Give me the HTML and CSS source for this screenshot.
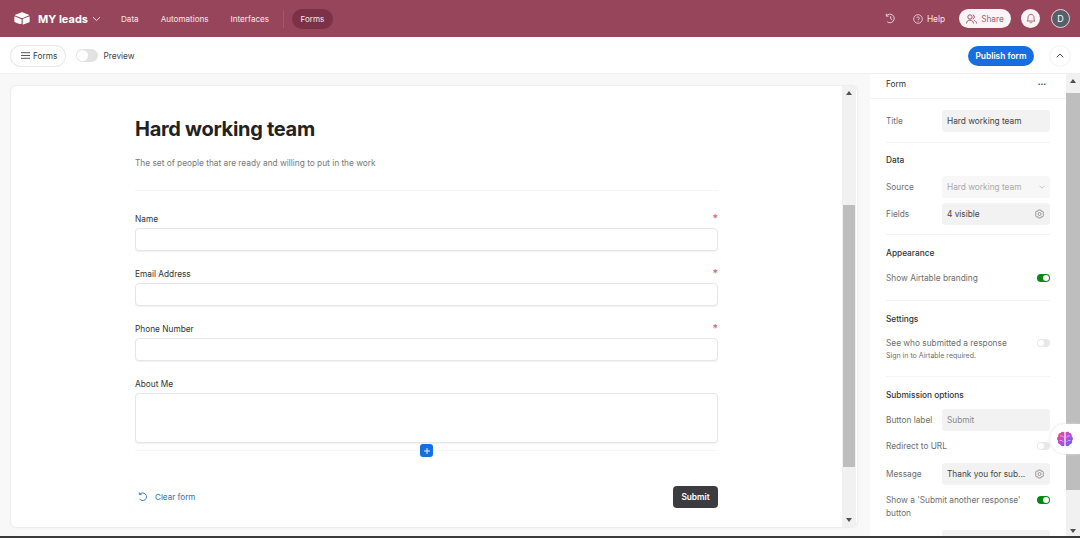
FILE: index.html
```html
<!DOCTYPE html>
<html lang="en">
<head>
  <meta charset="UTF-8">
  <meta name="viewport" content="width=device-width, initial-scale=1.0">
  <title>MY leads - Forms</title>
  <link rel="stylesheet" href="styles.css">
</head>
<body>
  <header class="topbar">
    <svg class="logo" width="16" height="13" viewBox="0 0 18 15">
      <path d="M8 .6 1.200 3.200c-.4.2-.4.700 0 .9L8 6.800c.7.300 1.400.300 2 0l6.800-2.700c.4-.2.4-.7 0-.9L10 .6C9.400.3 8.600.3 8 .6Z" fill="#fff"/>
      <path d="M9.800 8.300v5.700c0 .4.400.6.700.5l6.900-2.700c.3-.1.4-.3.400-.5V5.600c0-.4-.4-.6-.7-.5l-6.900 2.700c-.2.100-.4.300-.4.500Z" fill="#fff"/>
      <path d="M8.200 8.500 1 5.200c-.4-.2-.8.100-.8.500v5.200c0 .2.100.4.300.500l2.500 1.200c2 1 4 1.500 5.200 1.100.2-.1.300-.3.300-.5V9c0-.2-.1-.4-.3-.5Z" fill="#fff"/>
    </svg>
    <span class="base-name">MY leads</span>
    <svg class="chevron" width="9" height="6" viewBox="0 0 9 6"><path d="M1 1.200 4.500 4.600 8 1.200" fill="none" stroke="#f0dde2" stroke-width="1"/></svg>
    <nav class="nav">
      <a class="nav-link">Data</a>
      <a class="nav-link">Automations</a>
      <a class="nav-link">Interfaces</a>
      <span class="nav-sep"></span>
      <a class="nav-link nav-active">Forms</a>
    </nav>
    <div class="top-actions">
      <svg class="history" width="11" height="11" viewBox="0 0 11 11"><path d="M1.500 2.800A4.300 4.300 0 1 1 2.200 8.800M1.300.8v2.300h2.300M5.700 3.200v2.500l1.500 1" fill="none" stroke="#f3dfe4" stroke-width=".9"/></svg>
      <div class="help">
        <svg width="10" height="10" viewBox="0 0 10 10"><circle cx="5" cy="5" r="4.300" fill="none" stroke="#f3dfe4" stroke-width=".8"/><path d="M3.700 3.900A1.300 1.300 0 1 1 5 5.500v.7M5 7.200v.6" fill="none" stroke="#f3dfe4" stroke-width=".8"/></svg>
        <span>Help</span>
      </div>
      <button class="share">
        <svg width="11" height="10" viewBox="0 0 11 10"><circle cx="4" cy="3" r="2.200" fill="none" stroke="#96455a" stroke-width=".9"/><path d="M.5 9.500c0-2 1.500-3.400 3.500-3.400s3.500 1.400 3.500 3.400M6.800 .9a2.200 2.200 0 0 1 0 4.200M8.300 6.400c1.300.5 2.200 1.600 2.200 3.100" fill="none" stroke="#96455a" stroke-width=".9"/></svg>
        Share
      </button>
      <div class="bell">
        <svg width="10" height="11" viewBox="0 0 10 11"><path d="M1 8c.8-.8 1-1.500 1-3.200C2 2.900 3.200 1.300 5 1.300s3 1.600 3 3.500C8 6.500 8.200 7.200 9 8ZM3.900 9.300c.3.800 1.900.8 2.200 0" fill="none" stroke="#96455a" stroke-width=".8"/></svg>
      </div>
      <div class="avatar">D</div>
    </div>
  </header>

  <div class="toolbar">
    <button class="forms-btn">
      <svg width="9" height="7" viewBox="0 0 9 7"><path d="M0 .7h9M0 3.500h9M0 6.300h9" stroke="#444" stroke-width=".9"/></svg>
      Forms
    </button>
    <span class="preview-toggle"><i></i></span>
    <span class="preview-label">Preview</span>
    <button class="publish">Publish form</button>
    <button class="collapse">
      <svg width="8" height="5" viewBox="0 0 8 5"><path d="M.7 4.300 4 1l3.300 3.300" fill="none" stroke="#444" stroke-width="1"/></svg>
    </button>
  </div>

  <main class="workspace">
    <section class="form-area">
      <div class="card">
        <div class="form-body">
          <h1 class="form-title">Hard working team</h1>
          <p class="form-desc">The set of people that are ready and willing to put in the work</p>
          <hr class="form-rule">
          <div class="field">
            <div class="field-label"><span>Name</span><span class="req">*</span></div>
            <div class="input"></div>
          </div>
          <div class="field">
            <div class="field-label"><span>Email Address</span><span class="req">*</span></div>
            <div class="input"></div>
          </div>
          <div class="field">
            <div class="field-label"><span>Phone Number</span><span class="req">*</span></div>
            <div class="input"></div>
          </div>
          <div class="field">
            <div class="field-label"><span>About Me</span></div>
            <div class="input input-tall"></div>
          </div>
          <div class="add-row">
            <button class="add-btn">
              <svg width="6" height="6" viewBox="0 0 6 6"><path d="M3 0v6M0 3h6" stroke="#fff" stroke-width=".9"/></svg>
            </button>
          </div>
          <div class="form-actions">
            <a class="clear">
              <svg width="10" height="10" viewBox="0 0 10 10"><path d="M1.800 2.300A3.800 3.800 0 1 1 1.500 6.800M1.300 .4v2.200h2.200" fill="none" stroke="#2f6fb8" stroke-width=".9"/></svg>
              Clear form
            </a>
            <button class="submit">Submit</button>
          </div>
        </div>
        <div class="scrollbar card-scroll">
          <span class="arrow arrow-up"></span>
          <span class="thumb thumb-card"></span>
          <span class="arrow arrow-down"></span>
        </div>
      </div>
    </section>

    <aside class="panel">
      <div class="panel-head"><span>Form</span><span class="dots">···</span></div>
      <div class="panel-row row-first"><span class="row-label">Title</span><div class="box">Hard working team</div></div>
      <hr class="panel-rule rule-a">
      <h2 class="panel-heading heading-data">Data</h2>
      <div class="panel-row"><span class="row-label">Source</span>
        <div class="box box-muted">Hard working team
          <svg width="6" height="4" viewBox="0 0 6 4"><path d="M.5.700 3 3.200 5.500.7" fill="none" stroke="#bbb" stroke-width=".8"/></svg>
        </div>
      </div>
      <div class="panel-row row-gap"><span class="row-label">Fields</span>
        <div class="box">4 visible
          <svg width="11" height="11" viewBox="0 0 11 11"><path d="M4.300 1h2.400l.4 1.300 1.400-.3 1.200 2-1 1 1 1-1.200 2-1.400-.3-.4 1.300H4.300l-.4-1.300-1.400.3-1.200-2 1-1-1-1 1.200-2 1.400.3Z" fill="none" stroke="#777" stroke-width=".7"/><circle cx="5.500" cy="5" r="1.500" fill="none" stroke="#777" stroke-width=".7"/></svg>
        </div>
      </div>
      <hr class="panel-rule rule-b">
      <h2 class="panel-heading">Appearance</h2>
      <div class="toggle-row"><span class="row-label">Show Airtable branding</span><span class="switch switch-on"><i></i></span></div>
      <hr class="panel-rule rule-c">
      <h2 class="panel-heading">Settings</h2>
      <div class="toggle-row toggle-settings"><span class="row-label">See who submitted a response</span><span class="switch"><i></i></span></div>
      <p class="row-note">Sign in to Airtable required.</p>
      <hr class="panel-rule rule-d">
      <h2 class="panel-heading">Submission options</h2>
      <div class="panel-row"><span class="row-label">Button label</span><div class="box box-hint">Submit</div></div>
      <div class="toggle-row toggle-url"><span class="row-label">Redirect to URL</span><span class="switch"><i></i></span></div>
      <div class="panel-row row-message"><span class="row-label">Message</span>
        <div class="box">Thank you for sub...
          <svg width="11" height="11" viewBox="0 0 11 11"><path d="M4.300 1h2.400l.4 1.300 1.400-.3 1.200 2-1 1 1 1-1.200 2-1.400-.3-.4 1.300H4.300l-.4-1.300-1.400.3-1.200-2 1-1-1-1 1.200-2 1.400.3Z" fill="none" stroke="#777" stroke-width=".7"/><circle cx="5.500" cy="5" r="1.500" fill="none" stroke="#777" stroke-width=".7"/></svg>
        </div>
      </div>
      <div class="toggle-row toggle-another"><span class="row-label">Show a 'Submit another response' button</span><span class="switch switch-on"><i></i></span></div>
      <div class="panel-row row-last"><span class="row-label"></span><div class="box"></div></div>
    </aside>

    <div class="scrollbar page-scroll">
      <span class="arrow arrow-up"></span>
      <span class="thumb thumb-page"></span>
      <span class="arrow arrow-down"></span>
    </div>
  </main>

  <div class="brain">
    <svg width="18" height="17" viewBox="0 0 18 17">
      <defs>
        <linearGradient id="brainfill" x1="0" y1="0" x2="1" y2="1">
          <stop offset="0" stop-color="#f0506e"/>
          <stop offset=".5" stop-color="#b84be0"/>
          <stop offset="1" stop-color="#4a6cf0"/>
        </linearGradient>
      </defs>
      <path d="M8.400 1.600C7.500.3 5.300.4 4.600 1.900 2.800 2 1.700 3.700 2.300 5.300.7 6.300.6 8.700 2 9.800c-.6 1.800.6 3.400 2.300 3.600.5 1.800 3 2.300 4.100 1ZM9.600 1.600c.9-1.300 3.100-1.200 3.800.3 1.800.1 2.900 1.800 2.300 3.400 1.600 1 1.700 3.400.3 4.500.6 1.800-.6 3.400-2.300 3.600-.5 1.800-3 2.300-4.100 1Z" fill="url(#brainfill)"/>
      <path d="M4 5h2.500l1 1.500M3.500 9.500H6l1.500 1.500M14 5h-2.500l-1 1.500M14.500 9.500H12L10.500 11" fill="none" stroke="#fff" stroke-width=".6" opacity=".8"/>
    </svg>
  </div>
  <div class="screen-edge"></div>
</body>
</html>
```

FILE: styles.css
```css
* {
  margin: 0;
  padding: 0;
  box-sizing: border-box;
}
html, body {
  height: 100%;
  overflow: hidden;
}
body {
  display: flex;
  flex-direction: column;
  font-family: 'Inter', sans-serif;
  font-size: 8.3px;
  color: #333;
  background-color: #f8f8f8;
}
button {
  font-family: inherit;
  border: none;
  cursor: pointer;
}

/* top bar */
.topbar {
  flex: 0 0 37px;
  display: flex;
  align-items: center;
  padding-left: 14px;
  background-color: #96455a;
  color: #f6e9ec;
}
.base-name {
  margin-left: 8px;
  font-size: 11px;
  font-weight: 700;
  color: #fff;
}
.chevron {
  margin-left: 4px;
}
.nav {
  display: flex;
  align-items: center;
  margin-left: 20px;
}
.nav-link {
  font-size: 8.1px;
  margin-right: 22px;
}
.nav-sep {
  width: 1px;
  height: 18px;
  margin-left: -8px;
  margin-right: 8px;
  background-color: #a4586c;
}
.nav-active {
  padding: 5px 8.5px;
  margin-right: 0;
  border-radius: 10px;
  background-color: #7c3147;
}
.top-actions {
  display: flex;
  align-items: center;
  margin-left: auto;
  padding-right: 10px;
}
.help {
  display: flex;
  align-items: center;
  gap: 4px;
  margin-left: 17px;
  font-size: 8.3px;
}
.share {
  display: flex;
  align-items: center;
  justify-content: center;
  gap: 4px;
  width: 52px;
  height: 19px;
  margin-left: 14px;
  border-radius: 10px;
  background-color: #fbf3f5;
  color: #a45d70;
  font-size: 8.3px;
}
.bell {
  display: flex;
  align-items: center;
  justify-content: center;
  width: 19px;
  height: 19px;
  margin-left: 10px;
  border-radius: 50%;
  background-color: #fbf3f5;
}
.avatar {
  display: flex;
  align-items: center;
  justify-content: center;
  width: 19px;
  height: 19px;
  margin-left: 11px;
  border: 1px solid #e6d5da;
  border-radius: 50%;
  background-color: #56606b;
  color: #fff;
  font-size: 9px;
}

/* toolbar */
.toolbar {
  flex: 0 0 37px;
  display: flex;
  align-items: center;
  padding: 1px 10px 0 11px;
  background-color: #fff;
  border-bottom: 1px solid #efefef;
}
.forms-btn {
  display: flex;
  align-items: center;
  gap: 3px;
  height: 20px;
  padding: 0 8px 0 10px;
  border-radius: 10px;
  background-color: #fff;
  box-shadow: 0 0 0 1px #e8e8e8;
  color: #444;
  font-size: 8.3px;
}
.preview-toggle {
  display: block;
  width: 22px;
  height: 13px;
  margin-left: 11px;
  padding: 1px;
  border-radius: 7px;
  background-color: #e2e2e2;
}
.preview-toggle i {
  display: block;
  width: 11px;
  height: 11px;
  border-radius: 50%;
  background-color: #fff;
}
.preview-label {
  margin-left: 5px;
  font-size: 8.3px;
  color: #444;
}
.publish {
  margin-left: auto;
  width: 66px;
  height: 20px;
  border-radius: 10px;
  background-color: #166ee1;
  color: #fff;
  font-size: 8.4px;
  font-weight: 600;
}
.collapse {
  display: flex;
  align-items: center;
  justify-content: center;
  width: 20px;
  height: 20px;
  margin-left: 16px;
  border-radius: 50%;
  background-color: #fff;
  box-shadow: 0 0 2px #ddd;
}

/* main */
.workspace {
  flex: 1;
  min-height: 0;
  display: flex;
}
.form-area {
  flex: 0 0 870px;
  padding: 12px 13px 9px 11px;
}
.card {
  display: flex;
  height: 441px;
  overflow: hidden;
  border-radius: 5px;
  background-color: #fff;
  box-shadow: 0 0 2px #d0d0d0;
}
.form-body {
  flex: 1;
  padding: 29px 124px 0 124px;
}
.form-title {
  font-size: 20px;
  font-weight: 700;
  letter-spacing: -0.3px;
  line-height: 28px;
  color: #222;
}
.form-desc {
  margin-top: 13px;
  font-size: 8.3px;
  line-height: 14px;
  color: #777;
}
.form-rule {
  margin-top: 20px;
  border: none;
  border-top: 1px solid #f5f5f5;
}
.field {
  margin-top: 21px;
}
.field + .field {
  margin-top: 16px;
}
.field-label {
  display: flex;
  justify-content: space-between;
  height: 16px;
  font-size: 8.3px;
  line-height: 14px;
  color: #333;
}
.req {
  color: #d0597c;
  font-size: 11px;
  line-height: 12px;
}
.input {
  height: 23px;
  border: 1px solid #e6e6e6;
  border-radius: 4px;
  box-shadow: 0 1px 1px #f2f2f2;
  background-color: #fff;
}
.input-tall {
  height: 50px;
}
.add-row {
  display: flex;
  justify-content: center;
  align-items: center;
  height: 13px;
  margin-top: 1px;
  background: linear-gradient(#f6f6f6, #f6f6f6) center / 100% 1px no-repeat;
}
.add-btn {
  display: flex;
  align-items: center;
  justify-content: center;
  width: 13px;
  height: 13px;
  border-radius: 3px;
  background-color: #166ee1;
}
.form-actions {
  display: flex;
  align-items: center;
  justify-content: space-between;
  margin-top: 29px;
}
.clear {
  display: flex;
  align-items: center;
  gap: 7px;
  padding-left: 3px;
  font-size: 8.1px;
  color: #2f6fb8;
}
.submit {
  width: 45px;
  height: 22px;
  border-radius: 4px;
  background-color: #3c3c40;
  color: #fff;
  font-size: 8.3px;
  font-weight: 600;
}

/* scrollbars */
.scrollbar {
  flex: 0 0 14px;
  display: flex;
  flex-direction: column;
  align-items: stretch;
  background-color: #f1f1f1;
}
.card-scroll {
  margin-right: 1px;
}
.arrow {
  flex: 0 0 14px;
  display: flex;
  align-items: center;
  justify-content: center;
}
.arrow::before {
  content: "";
  border-left: 3.5px solid transparent;
  border-right: 3.5px solid transparent;
}
.arrow-up::before {
  border-bottom: 4px solid #505050;
}
.arrow-down::before {
  border-top: 4px solid #505050;
}
.thumb {
  background-color: #bebebe;
}
.thumb-card {
  height: 262px;
  margin-top: auto;
  margin-bottom: 46px;
  margin-left: 1px;
  margin-right: 1px;
}
.thumb-page {
  height: 397px;
  margin-top: 5px;
  margin-bottom: auto;
}

/* right panel */
.panel {
  flex: 0 0 196px;
  height: 462px;
  overflow: hidden;
  padding: 0 16px;
  background-color: #fff;
  font-size: 8.3px;
}
.panel-head {
  display: flex;
  justify-content: space-between;
  height: 25px;
  padding-top: 4px;
  margin: 0 -16px;
  padding-left: 16px;
  padding-right: 20px;
  line-height: 12px;
  color: #333;
  border-bottom: 1px solid #f4f4f4;
}
.dots {
  font-weight: 700;
}
.panel-row {
  display: flex;
  align-items: center;
}
.row-first {
  margin-top: 11px;
}
.row-gap {
  margin-top: 5px;
}
.row-label {
  flex: 1;
  color: #6e6e6e;
  line-height: 13px;
}
.box {
  display: flex;
  align-items: center;
  justify-content: space-between;
  flex: 0 0 108px;
  height: 22px;
  padding: 0 5px;
  border-radius: 3px;
  background-color: #f2f2f2;
  color: #444;
}
.box-muted {
  background-color: #f7f7f7;
  color: #aaa;
}
.box-hint {
  color: #888;
}
.panel-rule {
  border: none;
  border-top: 1px solid #f4f4f4;
}
.rule-a {
  margin-top: 10px;
}
.rule-b {
  margin-top: 9px;
}
.rule-c {
  margin-top: 15px;
}
.rule-d {
  margin-top: 15px;
}
.panel-heading {
  margin-top: 12px;
  margin-bottom: 8px;
  font-size: 8.3px;
  font-weight: 500;
  line-height: 12px;
  color: #333;
}
.heading-data {
  margin-top: 11px;
  margin-bottom: 10px;
}
.toggle-row {
  display: flex;
  align-items: flex-start;
  justify-content: space-between;
  gap: 14px;
  margin-top: 13px;
}
.switch {
  flex: 0 0 13px;
  height: 8px;
  margin-top: 2px;
  padding: 1px;
  border-radius: 4px;
  background-color: #e8e8e8;
}
.switch i {
  display: block;
  width: 6px;
  height: 6px;
  border-radius: 50%;
  background-color: #fff;
}
.switch-on {
  background-color: #048a0e;
}
.switch-on i {
  margin-left: 5px;
}
.row-note {
  margin-top: 1px;
  font-size: 7px;
  line-height: 10px;
  color: #6e6e6e;
}
.toggle-settings {
  margin-top: 12px;
}
.toggle-url {
  margin-top: 9px;
}
.row-message {
  margin-top: 10px;
}
.toggle-another {
  margin-top: 9px;
}
.row-last {
  margin-top: 10px;
}

/* brain helper over the panel edge */
.brain {
  position: absolute;
  left: 1050px;
  top: 424px;
  display: flex;
  align-items: center;
  padding-left: 6px;
  width: 30px;
  height: 30px;
  border-radius: 15px 0 0 15px;
  background-color: #fff;
  box-shadow: 0 0 3px #ddd;
}
.screen-edge {
  position: absolute;
  left: 0;
  right: 0;
  bottom: 0;
  height: 2px;
  background-color: #3a3a3a;
}
```
